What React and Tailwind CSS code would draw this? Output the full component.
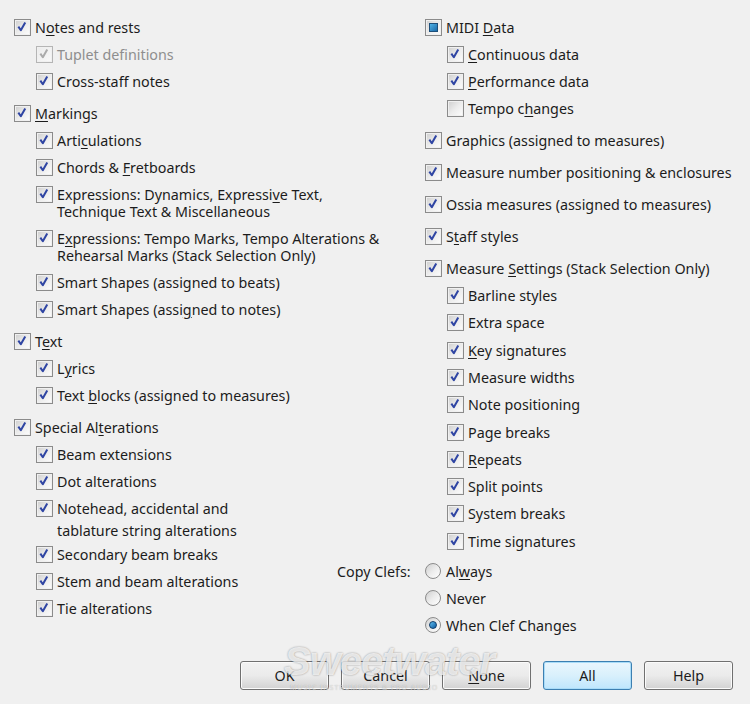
import clsx from "clsx";

// label strings use "_" before the mnemonic letter
const Label = ({ text }) => {
  const parts = text.split("_");
  return (
    <>
      {parts.map((p, i) =>
        i === 0 ? (
          <span key={i}>{p}</span>
        ) : (
          <span key={i}>
            <u className="underline-offset-[2px]">{p.charAt(0)}</u>
            {p.slice(1)}
          </span>
        )
      )}
    </>
  );
};

const Box = ({ state = "on" }) => {
  const disabled = state === "dis";
  return (
    <span
      className={clsx(
        "relative flex h-[17px] w-[17px] shrink-0 items-center justify-center border p-[1px]",
        disabled ? "border-[#b5b5b5]" : "border-[#8b8b8b]"
      )}
    >
      <span
        className={clsx(
          "h-full w-full bg-gradient-to-br",
          disabled ? "from-[#ececec] to-[#f8f8f8]" : "from-[#d2d2d2] via-[#ececec] to-[#fbfbfb]"
        )}
      />
      {(state === "on" || disabled) && (
        <svg viewBox="0 0 17 17" className="absolute inset-0 h-[15px] w-[15px]">
          <path
            d="M3.8 7.6 L6.6 11.6 L11.6 2.8"
            fill="none"
            stroke={disabled ? "#ababab" : "#2f45a3"}
            strokeWidth="2.3"
            strokeLinejoin="round"
          />
        </svg>
      )}
      {state === "mixed" && (
        <span className="absolute left-[3px] top-[3px] h-[9px] w-[9px] border border-[#1d4f7a] bg-gradient-to-br from-[#4fb2e6] to-[#1b6aa8]" />
      )}
    </span>
  );
};

const Row = ({ label, sub, state = "on", gap, loose, wide }) => {
  const lines = Array.isArray(label) ? label : [label];
  return (
    <div
      className={clsx(
        "flex items-start",
        loose ? "py-[5.15px]" : "py-[5px]",
        sub && "pl-[22px]",
        gap && "mt-[5px]",
        wide && "-mb-[3px]"
      )}
    >
      <Box state={state} />
      <span
        className={clsx(
          "ml-[4px] leading-[17px]",
          state === "dis" ? "text-[#8e8e8e]" : "text-[#1c1c1c]"
        )}
      >
        {lines.map((l, i) => (
          <span key={i} className={clsx("block whitespace-nowrap", wide && i > 0 && "mt-[5px]")}>
            <Label text={l} />
          </span>
        ))}
      </span>
    </div>
  );
};

const Radio = ({ on }) => (
  <span className="relative flex h-[16px] w-[16px] shrink-0 items-center justify-center rounded-full border border-[#8b8b8b] bg-gradient-to-br from-[#cfcfcf] via-[#ececec] to-[#ffffff]">
    {on && (
      <span className="h-[8px] w-[8px] rounded-full border border-[#0e3d6b] bg-gradient-to-br from-[#5fc0f0] to-[#0b5aa0]" />
    )}
  </span>
);

const Btn = ({ children, primary }) => (
  <button
    className={clsx(
      "h-[29px] w-[89px] rounded-[3px] border text-[14.3px] text-[#1c1c1c]",
      primary
        ? "border-[#3c7fb1] bg-gradient-to-b from-[#eaf6fd] via-[#d9f0fc] to-[#bee6fd] shadow-[inset_0_0_0_1px_#a9dcf8]"
        : "border-[#707070] bg-gradient-to-b from-[#f2f2f2] via-[#ebebeb] to-[#d2d2d2] shadow-[inset_0_0_0_1px_#fbfbfb]"
    )}
  >
    {children}
  </button>
);

export default function App() {
  return (
    <div className="relative flex h-[704px] w-[750px] flex-col overflow-hidden bg-[#f0f0f0] font-['Noto_Sans',sans-serif] text-[14.3px]">
      <div className="flex pl-[14px] pt-[14px]">
        <div className="w-[411px]">
          <Row label="N_otes and rests" />
          <Row label="Tuplet definitions" sub state="dis" />
          <Row label="Cross-staff notes" sub />
          <Row label="_Markings" gap />
          <Row label="Arti_culations" sub />
          <Row label="Chords & _Fretboards" sub />
          <Row label={["Expressions: Dynamics, Expressi_ve Text,", "Technique Text & Miscellaneous"]} sub />
          <Row label={["E_xpressions: Tempo Marks, Tempo Alterations &", "Rehearsal Marks (Stack Selection Only)"]} sub />
          <Row label="Smart Shapes (assigned to beats)" sub />
          <Row label="Smart Shapes (assi_gned to notes)" sub />
          <Row label="T_ext" gap />
          <Row label="L_yrics" sub />
          <Row label="Text _blocks (assigned to measures)" sub />
          <Row label="Special Al_terations" gap />
          <Row label="Beam extensions" sub />
          <Row label="Dot alterations" sub />
          <Row label={["Notehead, accidental and", "tablature string alterations"]} sub wide />
          <Row label="Secondary beam breaks" sub />
          <Row label="Stem and beam alterations" sub />
          <Row label="Tie alterations" sub />
        </div>
        <div>
          <Row label="MIDI _Data" state="mixed" />
          <Row label="_Continuous data" sub />
          <Row label="_Performance data" sub />
          <Row label="Tempo c_hanges" sub state="off" />
          <Row label="Graphics (assigned to measures)" gap />
          <Row label="Measure number positioning & enclosures" gap />
          <Row label="Ossia measures (assigned to measures)" gap />
          <Row label="S_taff styles" gap />
          <Row label="Measure _Settings (Stack Selection Only)" gap />
          <Row label="Barline styles" sub loose />
          <Row label="Extra space" sub loose />
          <Row label="_Key signatures" sub loose />
          <Row label="Measure widths" sub loose />
          <Row label="Note positioning" sub loose />
          <Row label="Page breaks" sub loose />
          <Row label="_Repeats" sub loose />
          <Row label="Split points" sub loose />
          <Row label="System breaks" sub loose />
          <Row label="Time signatures" sub loose />
          <div className="-ml-[88px] mt-[3px] flex">
            <span className="w-[88px] py-[5px] leading-[17px] text-[#1c1c1c]">Copy Clefs:</span>
            <div>
              {[
                ["Al_ways", false],
                ["Never", false],
                ["When Clef Changes", true],
              ].map(([t, on]) => (
                <div key={t} className="flex items-center py-[5px]">
                  <Radio on={on} />
                  <span className="ml-[5px] leading-[17px] text-[#1c1c1c]">
                    <Label text={t} />
                  </span>
                </div>
              ))}
            </div>
          </div>
        </div>
      </div>

      <div className="mt-auto flex justify-end gap-[12px] pb-[14px] pr-[17px]">
        <Btn>OK</Btn>
        <Btn>Cancel</Btn>
        <Btn>
          <Label text="_None" />
        </Btn>
        <Btn primary>All</Btn>
        <Btn>Help</Btn>
      </div>

      {/* watermark over the buttons */}
      <div className="pointer-events-none absolute left-[284px] top-[641px] select-none" aria-hidden="true">
        <div className="font-['Liberation_Sans',sans-serif] text-[40px] font-bold italic leading-none tracking-[-1px] text-white/75 [text-shadow:0_0_2px_rgba(0,0,0,0.4)]">
          Sweetwater
        </div>
        <div className="ml-[6px] mt-[2px] text-[7px] tracking-[1px] text-white/60 [text-shadow:0_0_1px_rgba(0,0,0,0.3)]">
          MUSIC INSTRUMENTS &amp; PRO AUDIO
        </div>
      </div>
    </div>
  );
}
